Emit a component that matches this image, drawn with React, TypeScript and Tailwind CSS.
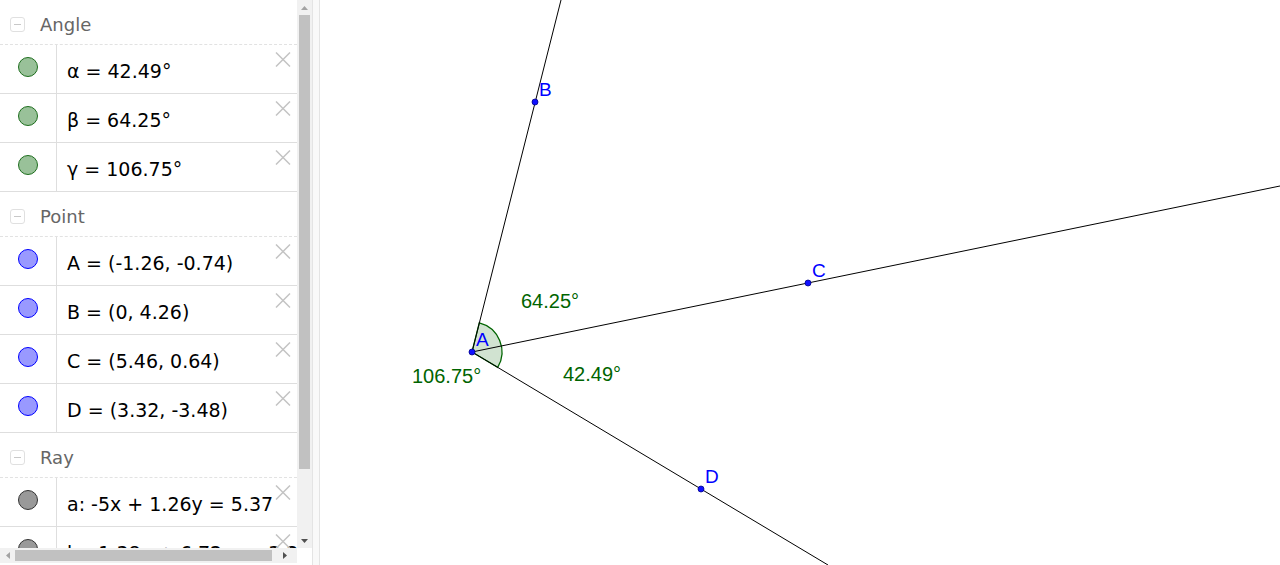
import React from "react";

type Item = { text: string; kind: "angle" | "point" | "ray" };
type Section = { title: string; items: Item[] };

const sections: Section[] = [
  {
    title: "Angle",
    items: [
      { text: "α = 42.49°", kind: "angle" },
      { text: "β = 64.25°", kind: "angle" },
      { text: "γ = 106.75°", kind: "angle" },
    ],
  },
  {
    title: "Point",
    items: [
      { text: "A = (-1.26, -0.74)", kind: "point" },
      { text: "B = (0, 4.26)", kind: "point" },
      { text: "C = (5.46, 0.64)", kind: "point" },
      { text: "D = (3.32, -3.48)", kind: "point" },
    ],
  },
  {
    title: "Ray",
    items: [
      { text: "a: -5x + 1.26y = 5.37", kind: "ray" },
      { text: "b: -1.38x + 6.72y = -3.23", kind: "ray" },
    ],
  },
];

const dotClass: Record<Item["kind"], string> = {
  angle: "bg-[#99c199] border-[#1e6e1e]",
  point: "bg-[#9999ff] border-[#0000ff]",
  ray: "bg-[#999999] border-[#333333]",
};

const CloseIcon = () => (
  <svg width="16" height="15" viewBox="0 0 16 15" className="block">
    <path d="M1 0.5 L15 14.5 M15 0.5 L1 14.5" stroke="#c4c4c4" strokeWidth="1.5" fill="none" />
  </svg>
);

const Header = ({ title }: { title: string }) => (
  <div className="box-border flex h-[45px] shrink-0 border-b border-dashed border-[#e2e2e2]">
    <div className="ml-[10px] mt-[17px] flex h-[15px] w-[15px] items-center justify-center rounded-[3px] border border-[#e0e0e0]">
      <div className="h-[1.5px] w-[7px] bg-[#c8c8c8]" />
    </div>
    <div className="ml-[15px] pt-[16px] text-[18px] leading-[18px] text-[#666666]">{title}</div>
  </div>
);

const Row = ({ item }: { item: Item }) => (
  <div className="relative box-border flex h-[49px] shrink-0 border-b border-[#dedede]">
    <div className="box-border w-[57px] shrink-0 border-r border-[#dedede] pl-[18px] pt-[12px]">
      <div className={`h-[20px] w-[20px] rounded-full border ${dotClass[item.kind]}`} />
    </div>
    <div className="whitespace-nowrap pl-[10px] pt-[17px] text-[19px] leading-[19px] text-black">{item.text}</div>
    <div className="absolute right-[6px] top-[7px]">
      <CloseIcon />
    </div>
  </div>
);

const AlgebraView = () => (
  <div className="flex w-[312px] shrink-0 flex-col">
    <div className="flex h-[548px] shrink-0">
      <div className="flex w-[297px] shrink-0 flex-col overflow-hidden bg-white">
        {sections.map((s) => (
          <React.Fragment key={s.title}>
            <Header title={s.title} />
            {s.items.map((it) => (
              <Row key={it.text} item={it} />
            ))}
          </React.Fragment>
        ))}
      </div>
      <div className="flex w-[15px] shrink-0 flex-col bg-[#f1f1f1]">
        <div className="flex h-[15px] items-center justify-center">
          <svg width="7" height="4" viewBox="0 0 7 4">
            <path d="M0 4 L3.5 0 L7 4 Z" fill="#a3a3a3" />
          </svg>
        </div>
        <div className="mx-[2px] h-[454px] bg-[#c1c1c1]" />
        <div className="flex-1" />
        <div className="flex h-[15px] items-center justify-center">
          <svg width="7" height="4" viewBox="0 0 7 4">
            <path d="M0 0 L3.5 4 L7 0 Z" fill="#505050" />
          </svg>
        </div>
      </div>
    </div>
    <div className="flex h-[15px] shrink-0">
      <div className="flex w-[297px] items-center bg-[#f1f1f1]">
        <div className="flex w-[15px] justify-center">
          <svg width="4" height="7" viewBox="0 0 4 7">
            <path d="M4 0 L0 3.5 L4 7 Z" fill="#a3a3a3" />
          </svg>
        </div>
        <div className="h-[11px] w-[257px] bg-[#c1c1c1]" />
        <div className="flex flex-1 justify-center">
          <svg width="4" height="7" viewBox="0 0 4 7">
            <path d="M0 0 L4 3.5 L0 7 Z" fill="#505050" />
          </svg>
        </div>
      </div>
    </div>
  </div>
);

const A = { x: 472, y: 352 };
const pts = [
  { name: "A", x: 472, y: 352, lx: 476, ly: 346 },
  { name: "B", x: 535, y: 102, lx: 539, ly: 96 },
  { name: "C", x: 808, y: 283, lx: 812, ly: 277 },
  { name: "D", x: 701, y: 489, lx: 705, ly: 483 },
];

const GraphicsView = () => (
  <div className="h-[565px] flex-1 bg-white">
    <svg width="960" height="565" viewBox="320 0 960 565" className="block">
      <path
        d="M472 352 L497.7 367.4 A30 30 0 0 0 479.3 322.9 Z"
        fill="#006400"
        fillOpacity="0.18"
        stroke="#006400"
        strokeWidth="1.3"
      />
      <line x1={A.x} y1={A.y} x2="561" y2="0" stroke="#000" strokeWidth="1" />
      <line x1={A.x} y1={A.y} x2="1280" y2="186" stroke="#000" strokeWidth="1" />
      <line x1={A.x} y1={A.y} x2="828" y2="565" stroke="#000" strokeWidth="1" />
      <g fontFamily="'Liberation Sans', Arial, sans-serif" fontSize="20" fill="#006400">
        <text x="521" y="308">64.25°</text>
        <text x="563" y="381">42.49°</text>
        <text x="412" y="383">106.75°</text>
      </g>
      {pts.map((p) => (
        <g key={p.name}>
          <circle cx={p.x} cy={p.y} r="3" fill="#1010ff" stroke="#00008b" strokeWidth="0.8" />
          <text
            x={p.lx}
            y={p.ly}
            fontFamily="'Liberation Sans', Arial, sans-serif"
            fontSize="19"
            fill="#0000ff"
          >
            {p.name}
          </text>
        </g>
      ))}
    </svg>
  </div>
);

export default function App() {
  return (
    <div className="flex h-[565px] w-[1280px] overflow-hidden bg-white font-['DejaVu_Sans',sans-serif]">
      <AlgebraView />
      <div className="box-border h-[565px] w-[8px] shrink-0 border-x border-[#e4e4e4] bg-[#f9f9f9]" />
      <GraphicsView />
    </div>
  );
}
